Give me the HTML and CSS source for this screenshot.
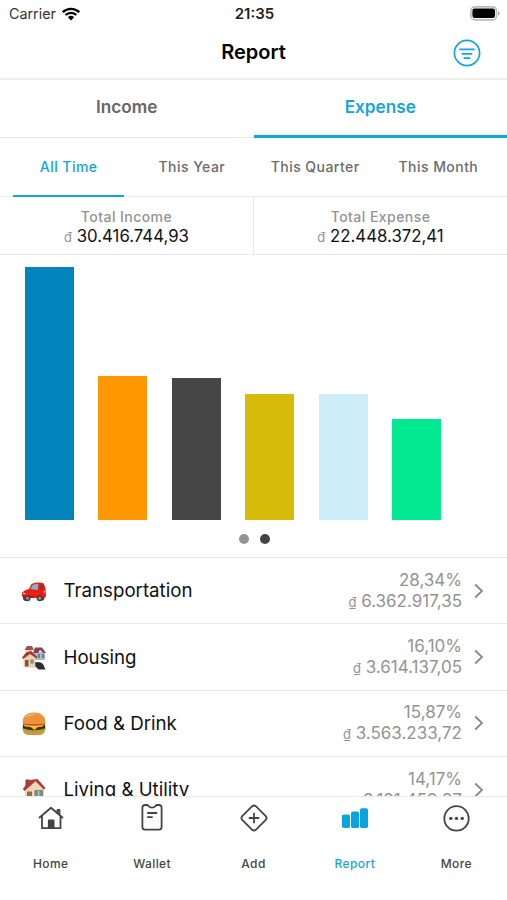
FILE: index.html
```html
<!DOCTYPE html>
<html lang="en">
<head>
  <meta charset="UTF-8" />
  <meta name="viewport" content="width=device-width, initial-scale=1.0"/>
  <title>Report</title>
  <link rel="stylesheet" href="styles.css">
</head>
<body>
  <div class="status-bar">
    <div class="carrier">
      <span>Carrier</span>
      <svg width="18" height="14" viewBox="0 0 18 14">
        <path d="M0.8 5.2a11.6 11.6 0 0 1 16.4 0M3.6 8a7.7 7.7 0 0 1 10.8 0" fill="none" stroke="#000" stroke-width="2.3"/>
        <path d="M5.9 10.2a4.5 4.5 0 0 1 6.2 0L9 13.4z"/>
      </svg>
    </div>
    <div class="time">21:35</div>
    <div class="battery">
      <svg width="30" height="15" viewBox="0 0 30 15">
        <rect x="0.9" y="0.9" width="25.600" height="13" rx="4" fill="#fff" stroke="#bbb" stroke-width="1.6"/>
        <rect x="2.4" y="2.6" width="22.6" height="9.4" rx="2.2"/>
        <path d="M28 5.2c2.2.8 2.2 3.6 0 4.4z" fill="#aaa"/>
      </svg>
    </div>
  </div>

  <header>
    <h1>Report</h1>
    <svg class="filter" width="28" height="28" viewBox="0 0 28 28">
      <circle cx="14" cy="14" r="12.6"/>
      <path d="M6.3 10.3h15.4M8.7 14.8h10.6M10.7 19.1h6.6"/>
    </svg>
  </header>

  <div class="type-tabs">
    <div class="type-tab">Income</div>
    <div class="type-tab active">Expense</div>
  </div>

  <div class="period-tabs">
    <div class="period-tab active">All Time</div>
    <div class="period-tab">This Year</div>
    <div class="period-tab">This Quarter</div>
    <div class="period-tab">This Month</div>
  </div>

  <div class="totals">
    <div class="total">
      <span class="total-label">Total Income</span>
      <span class="total-value"><small>đ</small> 30.416.744,93</span>
    </div>
    <div class="total">
      <span class="total-label">Total Expense</span>
      <span class="total-value"><small>đ</small> 22.448.372,41</span>
    </div>
  </div>

  <div class="chart">
    <div class="bars">
      <div class="bar" style="height: 253px; background: #0284bd"></div>
      <div class="bar" style="height: 144px; background: #ff9703"></div>
      <div class="bar" style="height: 142px; background: #464646"></div>
      <div class="bar" style="height: 126px; background: #d7bb0a"></div>
      <div class="bar" style="height: 126px; background: #cdedf9"></div>
      <div class="bar" style="height: 101px; background: #02ea91"></div>
    </div>
    <div class="dots">
      <span class="dot"></span>
      <span class="dot current"></span>
    </div>
  </div>

  <div class="list">
    <div class="row">
      <svg class="emoji" width="26" height="26" viewBox="0 0 26 26">
        <ellipse cx="5" cy="19.7" rx="3" ry="3.2" fill="#444"/>
        <ellipse cx="20" cy="19.7" rx="3.5" ry="3" fill="#444"/>
        <path d="M1 14.5Q4 11.5 8 11l2.5-5q6-2.3 12-.8 2.2 3.8 2.4 8.3v5.2l-2 1.2-20.5.2Q.2 18 1 14.5z" fill="#ed1c14"/>
        <path d="M9.5 11l2.3-4.2q2.500-1 5.500-.9l-.6 6z" fill="#78b9cc"/>
        <path d="M19 6.200l2.600.1 1.500 4.500-4.300.8z" fill="#8e3430"/>
        <path d="M1.500 15l3 .8M22.500 13.800h2" stroke="#ffc4a8" stroke-width="1.2"/>
        <path d="M2 18.800h11" stroke="#981510" stroke-width="1.3"/>
        <circle cx="6.5" cy="20.2" r="3" fill="#3d4042"/><circle cx="6.5" cy="20.2" r="1.5" fill="#999"/>
        <circle cx="18.7" cy="20.2" r="3" fill="#3d4042"/><circle cx="18.7" cy="20.2" r="1.5" fill="#999"/>
      </svg>
      <span class="name">Transportation</span>
      <div class="amount"><span>28,34%</span><span><small>₫</small> 6.362.917,35</span></div>
      <svg class="chevron" width="10" height="16" viewBox="0 0 10 16"><path d="M1.2 1.500L8 8l-6.800 6.500"/></svg>
    </div>
    <div class="row">
      <svg class="emoji" width="26" height="26" viewBox="0 0 26 26">
        <path d="M5 4h6v7H5z" fill="#ddcab8"/>
        <path d="M3.5 5L6 1h5l2 4z" fill="#aa4c4a"/>
        <path d="M13 7h11v8H13z" fill="#aebac6"/>
        <path d="M12 8l2-5.500h7l4 5.500-3-.2-3-2.800-2 3z" fill="#87434c"/>
        <path d="M17 9h2v4h-2zM21 9h2v4h-2z" fill="#657f98"/>
        <path d="M2.500 12L8 7.500l6.500 5V23l-12-1z" fill="#ead2ae"/>
        <path d="M1 12.500l4-5 5-1.500 6.500 6-1 1.500L9 9l-7 5z" fill="#a93635"/>
        <path d="M4 15h3.500v6.500H4z" fill="#865238"/>
        <path d="M9.500 14.500h3v4h-3z" fill="#648da5"/>
        <path d="M14 17.500q5-1.500 8 1.500l2.500 5.500h-7l-3-3z" fill="#2e2d32"/>
      </svg>
      <span class="name">Housing</span>
      <div class="amount"><span>16,10%</span><span><small>₫</small> 3.614.137,05</span></div>
      <svg class="chevron" width="10" height="16" viewBox="0 0 10 16"><path d="M1.2 1.500L8 8l-6.800 6.500"/></svg>
    </div>
    <div class="row">
      <svg class="emoji" width="26" height="26" viewBox="0 0 26 26">
        <path d="M2 18h22q.5 6-7 6H9q-7.500 0-7-6z" fill="#dc913e"/>
        <path d="M1.500 15.500h23v3.200q-3 2.300-5.500.8-2.500 1.700-5 .2-3 1.600-5.500 0-4 1.300-7-1z" fill="#78b82b"/>
        <path d="M2 13.500h22v3.700q-11 4-22 0z" fill="#49261b"/>
        <path d="M2 13.200h22l-3 2.500-4 .2-3.500 3-4-3-5.500-.5z" fill="#ffc21c"/>
        <path d="M2 11.500h22v2.200q-11 2.200-22 0z" fill="#da4b28"/>
        <path d="M1.500 11Q2 1.500 13 1.500T24.500 11q0 2-3.500 2H5q-3.500 0-3.500-2z" fill="#e8943e"/>
        <path d="M5 6q3-3 9-2.700" stroke="#f5b66c" stroke-width="1.5" fill="none"/>
      </svg>
      <span class="name">Food &amp; Drink</span>
      <div class="amount"><span>15,87%</span><span><small>₫</small> 3.563.233,72</span></div>
      <svg class="chevron" width="10" height="16" viewBox="0 0 10 16"><path d="M1.2 1.500L8 8l-6.800 6.500"/></svg>
    </div>
    <div class="row">
      <svg class="emoji" width="26" height="26" viewBox="0 0 26 26">
        <path d="M4.500 2.500h3.700V9H4.500z" fill="#9b3a37"/>
        <path d="M4 12l10-8.500 9 8.500v12H4z" fill="#eed9b5"/>
        <path d="M1.800 12L8.500 3l8-1 8 9-1.500 1.800-8.500-8.500L3.500 14z" fill="#b13c35"/>
        <path d="M6 14.500h5V24H6z" fill="#94694b"/>
        <path d="M14 13.500h7.500v6.300H14z" fill="#5698c4" stroke="#927960"/>
        <path d="M17.700 13.500v6.300" stroke="#e5d4b5"/>
      </svg>
      <span class="name">Living &amp; Utility</span>
      <div class="amount"><span>14,17%</span><span><small>₫</small> 3.181.459,27</span></div>
      <svg class="chevron" width="10" height="16" viewBox="0 0 10 16"><path d="M1.2 1.500L8 8l-6.800 6.500"/></svg>
    </div>
  </div>

  <nav>
    <div class="nav-item">
      <svg width="28" height="28" viewBox="0 0 28 28">
        <path d="M2 14L14 3.800 26 14M5 12v12.200h18.500V12M20.500 9V5.800h2v5"/>
        <path d="M11.800 16.500h4.800v7.700h-4.800z" fill="#444"/>
      </svg>
      <span>Home</span>
    </div>
    <div class="nav-item">
      <svg width="28" height="28" viewBox="0 0 28 28">
        <path d="M7 1H8.700q1.200 0 1.800 1a4.500 4.500 0 0 0 7 0q.6-1 1.800-1h1.700q2.600 0 2.600 2.600v19.400q0 2.600-2.600 2.600h-14q-2.600 0-2.600-2.600V3.600q0-2.600 2.600-2.600z"/>
        <path d="M9.200 9h10M9.200 13.200h5.500"/>
      </svg>
      <span>Wallet</span>
    </div>
    <div class="nav-item">
      <svg width="28" height="28" viewBox="0 0 28 28">
        <path d="M12.200 2.200q1.800-1.500 3.600 0l10 10q1.500 1.800 0 3.600l-10 10q-1.800 1.500-3.600 0l-10-10q-1.500-1.800 0-3.600zM14 8.800v10.400M8.800 14h10.400"/>
      </svg>
      <span>Add</span>
    </div>
    <div class="nav-item active">
      <svg width="28" height="28" viewBox="0 0 28 28">
        <g fill="#0ba3df" stroke="none">
          <rect x="1" y="10.5" width="8" height="13.5" rx="1.8"/>
          <rect x="10" y="7.6" width="8" height="16.4" rx="1.8"/>
          <rect x="19" y="4.3" width="8" height="19.7" rx="1.8"/>
        </g>
      </svg>
      <span>Report</span>
    </div>
    <div class="nav-item">
      <svg width="28" height="28" viewBox="0 0 28 28">
        <circle cx="14.500" cy="14.4" r="12.2"/>
        <g fill="#444" stroke="none"><circle cx="8.8" cy="14.4" r="1.7"/><circle cx="14.5" cy="14.4" r="1.7"/><circle cx="20.2" cy="14.4" r="1.7"/></g>
      </svg>
      <span>More</span>
    </div>
  </nav>
</body>
</html>
```
FILE: styles.css
```css
:root {
  --blue: #12a5dc;
  --line: #e9e9e9;
  --gray: #939393;
}

* {
  box-sizing: border-box;
}

body {
  margin: 0;
  height: 900px;
  display: flex;
  flex-direction: column;
  overflow: hidden;
  font-family: Inter, "Liberation Sans", sans-serif;
  background: #fff;
  color: #111;
}

svg {
  display: block;
  flex: none;
}

.status-bar {
  height: 27px;
  padding: 0 7px 0 9px;
  display: grid;
  grid-template-columns: 1fr auto 1fr;
  align-items: center;
  font-size: 14.3px;
  color: #222;
}

.carrier {
  display: flex;
  align-items: center;
  gap: 6px;
  color: #333;
}

.time {
  font-size: 15px;
  font-weight: 600;
}

.battery {
  justify-self: end;
}

header {
  height: 53px;
  padding: 0 26px;
  display: grid;
  grid-template-columns: 1fr auto 1fr;
  align-items: center;
  border-bottom: 2px solid #efefef;
}

h1 {
  grid-column: 2;
  margin: -1px 0 0;
  font-size: 20px;
  font-weight: 600;
  color: #000;
}

.filter {
  justify-self: end;
  fill: none;
  stroke: var(--blue);
  stroke-width: 1.7;
}

.type-tabs {
  height: 58px;
  display: flex;
}

.type-tab {
  flex: 1;
  padding-top: 17px;
  text-align: center;
  font-size: 17.2px;
  line-height: 20px;
  font-weight: 600;
  color: #666;
  border-bottom: 1px solid var(--line);
}

.type-tab.active {
  color: var(--blue);
  border-bottom: 3px solid var(--blue);
}

.period-tabs {
  height: 59px;
  padding: 0 7px;
  display: flex;
  border-bottom: 1px solid var(--line);
}

.period-tab {
  flex: 1;
  margin: 0 6px -1px;
  padding-top: 19px;
  text-align: center;
  white-space: nowrap;
  font-size: 14px;
  line-height: 19px;
  font-weight: 500;
  letter-spacing: 0.45px;
  color: #6c6c6c;
}

.period-tab.active {
  color: var(--blue);
  border-bottom: 2px solid var(--blue);
}

.totals {
  height: 58px;
  display: flex;
  border-bottom: 1px solid var(--line);
}

.total {
  flex: 1;
  padding-top: 10px;
  display: flex;
  flex-direction: column;
  align-items: center;
}

.total + .total {
  border-left: 1px solid var(--line);
}

.total-label {
  font-size: 14px;
  line-height: 20px;
  font-weight: 500;
  letter-spacing: 0.45px;
  color: var(--gray);
}

.total-value {
  font-size: 16.8px;
  line-height: 19px;
}

.total-value small {
  font-size: 13px;
  color: var(--gray);
}

.chart {
  height: 302px;
  padding: 12px 25px 0;
}

.bars {
  height: 253px;
  display: flex;
  align-items: flex-end;
  gap: 24.4px;
}

.bar {
  width: 49px;
}

.dots {
  padding: 14px 0 0 1px;
  display: flex;
  justify-content: center;
  gap: 11px;
}

.dot {
  width: 10px;
  height: 10px;
  border-radius: 50%;
  background: var(--gray);
}

.dot.current {
  background: #444;
}

.list {
  flex: 1;
  min-height: 0;
  overflow: hidden;
}

.row {
  height: 66.4px;
  padding: 0 23px 0 21px;
  display: flex;
  align-items: center;
  border-top: 1px solid var(--line);
}

.emoji {
  margin-top: 1px;
}

.name {
  flex: 1;
  margin-left: 16.5px;
  font-size: 18.7px;
}

.amount {
  margin-top: 1px;
  display: flex;
  flex-direction: column;
  align-items: flex-end;
  font-size: 17px;
  line-height: 21px;
  color: var(--gray);
}

.amount small {
  font-size: 13px;
}

.chevron {
  margin-left: 12px;
  fill: none;
  stroke: #888;
  stroke-width: 1.8;
}

nav {
  height: 104px;
  display: flex;
  border-top: 1px solid var(--line);
}

.nav-item {
  flex: 1;
  padding-top: 7px;
  display: flex;
  flex-direction: column;
  align-items: center;
  gap: 24px;
  font-size: 12px;
  line-height: 16px;
  font-weight: 500;
  letter-spacing: 0.4px;
  color: #444;
}

.nav-item svg {
  fill: none;
  stroke: #444;
  stroke-width: 1.8;
  stroke-linejoin: round;
}

.nav-item.active {
  color: var(--blue);
}
```
